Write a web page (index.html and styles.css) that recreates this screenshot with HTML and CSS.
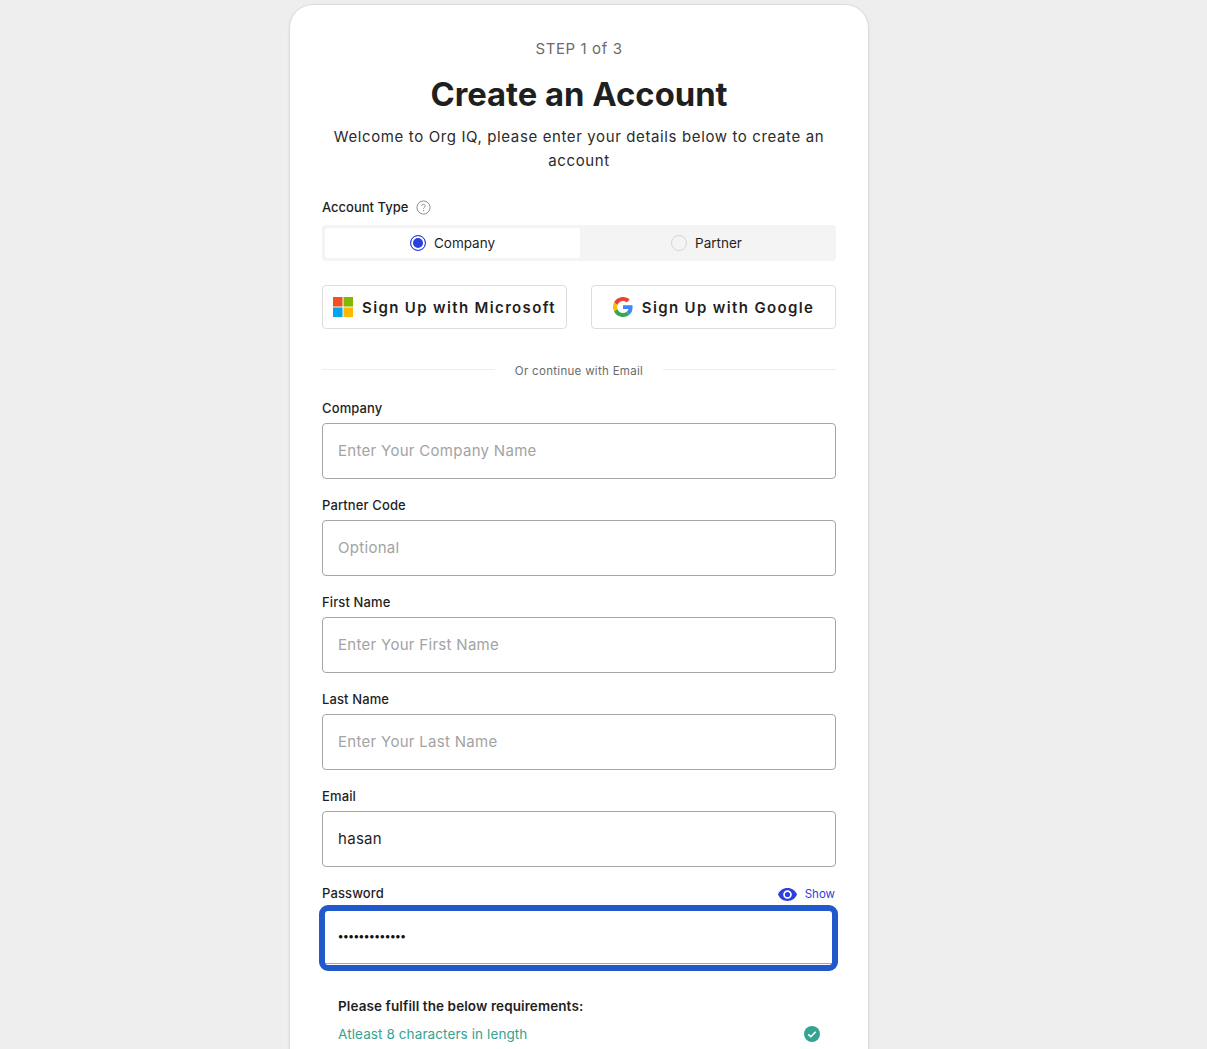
FILE: index.html
```html
<!DOCTYPE html>
<html lang="en">
<head>
<meta charset="utf-8">
<title>Create an Account</title>
<link rel="stylesheet" href="styles.css">
</head>
<body>
<main class="card">
  <p class="step">STEP 1 of 3</p>
  <h1 class="title">Create an Account</h1>
  <p class="intro">Welcome to Org IQ, please enter your details below to create an account</p>

  <div class="type-label"><span>Account Type</span>
    <svg class="help" viewBox="0 0 16 16" width="15" height="15" aria-hidden="true"><circle cx="8" cy="8" r="7" fill="none" stroke="#8a8a8a"/><path d="M6.200 6.300a1.800 1.800 0 1 1 2.700 1.600c-.6.400-.9.700-.9 1.400" fill="none" stroke="#8a8a8a"/><circle cx="8" cy="11.400" r=".7" fill="#8a8a8a"/></svg>
  </div>
  <div class="segmented">
    <div class="segment segment-on"><span class="radio radio-on"></span>Company</div>
    <div class="segment"><span class="radio"></span>Partner</div>
  </div>

  <div class="sso">
    <button class="sso-btn" type="button">
      <svg width="20" height="20" viewBox="0 0 21 21" aria-hidden="true"><rect width="10" height="10" fill="#f25022"/><rect x="11" width="10" height="10" fill="#7fba00"/><rect y="11" width="10" height="10" fill="#00a4ef"/><rect x="11" y="11" width="10" height="10" fill="#ffb900"/></svg>
      Sign Up with Microsoft
    </button>
    <button class="sso-btn" type="button">
      <svg width="20" height="20" viewBox="0 0 48 48" aria-hidden="true"><path fill="#EA4335" d="M24 9.500c3.500 0 6.700 1.200 9.200 3.600l6.900-6.900C35.900 2.400 30.500 0 24 0 14.600 0 6.500 5.400 2.600 13.200l8 6.200C12.500 13.600 17.800 9.500 24 9.500z"/><path fill="#4285F4" d="M47 24.500c0-1.600-.1-3.100-.4-4.500H24v9h12.900c-.6 3-2.200 5.400-4.700 7.100l7.700 6C44.400 37.900 47 31.800 47 24.500z"/><path fill="#FBBC05" d="M10.600 28.600a14.500 14.500 0 0 1 0-9.200l-8-6.200a24 24 0 0 0 0 21.600l8-6.200z"/><path fill="#34A853" d="M24 48c6.500 0 11.900-2.100 15.900-5.900l-7.700-6c-2.200 1.500-5 2.400-8.200 2.400-6.200 0-11.500-4.100-13.400-9.900l-8 6.200C6.500 42.600 14.600 48 24 48z"/></svg>
      Sign Up with Google
    </button>
  </div>

  <div class="divider"><span>Or continue with Email</span></div>

  <div class="field">
    <label class="label" for="company">Company</label>
    <input class="input" id="company" placeholder="Enter Your Company Name">
  </div>
  <div class="field">
    <label class="label" for="partner">Partner Code</label>
    <input class="input" id="partner" placeholder="Optional">
  </div>
  <div class="field">
    <label class="label" for="first">First Name</label>
    <input class="input" id="first" placeholder="Enter Your First Name">
  </div>
  <div class="field">
    <label class="label" for="last">Last Name</label>
    <input class="input" id="last" placeholder="Enter Your Last Name">
  </div>
  <div class="field">
    <label class="label" for="email">Email</label>
    <input class="input" id="email" value="hasan">
  </div>
  <div class="field">
    <div class="label-row">
      <label class="label" for="password">Password</label>
      <span class="show">
        <svg width="19" height="13" viewBox="0 0 22 15" aria-hidden="true"><path fill="#2a3fdc" d="M11 0C6 0 1.700 3.100 0 7.500 1.700 11.900 6 15 11 15s9.300-3.100 11-7.500C20.300 3.100 16 0 11 0zm0 12.500a5 5 0 1 1 0-10 5 5 0 0 1 0 10zm0-8a3 3 0 1 0 0 6 3 3 0 0 0 0-6z"/></svg>
        Show
      </span>
    </div>
    <div class="pw-wrap">
      <input class="input input-pw" id="password" type="password" value="abcdefghijklm">
    </div>
  </div>

  <div class="reqs">
    <p class="reqs-title">Please fulfill the below requirements:</p>
    <div class="req">
      <span>Atleast 8 characters in length</span>
      <svg width="16" height="16" viewBox="0 0 16 16" aria-hidden="true"><circle cx="8" cy="8" r="8" fill="#36a291"/><path d="M4.300 8.300l2.500 2.400 4.900-5" fill="none" stroke="#fff" stroke-width="1.600"/></svg>
    </div>
  </div>
</main>
</body>
</html>
```
FILE: styles.css
```css
* { box-sizing: border-box; }
html, body { height: 100%; overflow: hidden; }
body {
  margin: 0;
  background: #eeeeee;
  padding: 4px 0 0 289px;
  font-family: "Inter", "Liberation Sans", sans-serif;
  color: #1f1f1f;
}
.card {
  width: 580px;
  height: 1200px;
  background: #fff;
  border: 1px solid #dddddd;
  border-radius: 24px;
  box-shadow: 0 1px 3px rgba(0,0,0,.08);
  padding: 34px 32px 32px;
}
.step {
  margin: 0;
  text-align: center;
  font-size: 15px;
  line-height: 20px;
  color: #6b6b6b;
  letter-spacing: .6px;
}
.title {
  margin: 14px 0 0;
  text-align: center;
  font-size: 32.800px;
  line-height: 42px;
  font-weight: 700;
  color: #1f1f1f;
}
.intro {
  margin: 10px 0 0;
  text-align: center;
  font-size: 15px;
  line-height: 24px;
  letter-spacing: .62px;
  color: #2b2b2b;
}
.type-label {
  margin-top: 24px;
  display: flex;
  align-items: center;
  gap: 8px;
  font-size: 13px;
  line-height: 20px;
  font-weight: 500;
}
.help { display: block; }
.segmented {
  margin-top: 8px;
  height: 36px;
  padding: 3px;
  background: #f4f4f4;
  border-radius: 4px;
  display: grid;
  grid-template-columns: 255px 1fr;
  font-size: 13.500px;
}
.segment {
  display: flex;
  align-items: center;
  justify-content: center;
  gap: 8px;
  border-radius: 3px;
}
.segment-on { background: #fff; }
.radio {
  width: 16px;
  height: 16px;
  border-radius: 50%;
  border: 1px solid #d5d5d5;
  background: #f4f4f4;
}
.radio-on {
  border: 1.500px solid #2a3fdc;
  background: #2a3fdc;
  box-shadow: inset 0 0 0 2px #fff;
}
.sso {
  margin-top: 24px;
  display: flex;
  justify-content: space-between;
}
.sso-btn {
  width: 245px;
  height: 44px;
  background: #fff;
  border: 1px solid #dddddd;
  border-radius: 4px;
  display: flex;
  align-items: center;
  justify-content: center;
  gap: 9px;
  font: 600 15px "Inter", "Liberation Sans", sans-serif;
  letter-spacing: 1.350px;
  color: #1f1f1f;
  padding: 0;
}
.divider {
  margin-top: 31px;
  display: flex;
  align-items: flex-start;
  gap: 20px;
  font-size: 11.500px;
  line-height: 18px;
  color: #6b6b6b;
  letter-spacing: .3px;
}
.divider span { padding-top: 2px; }
.divider::before, .divider::after {
  content: "";
  flex: 1;
  height: 1px;
  margin-top: 9px;
  background: #eeeeee;
}
.field { margin-top: 16px; }
.divider + .field { margin-top: 18px; }
.label {
  display: block;
  font-size: 13px;
  line-height: 20px;
  font-weight: 500;
  letter-spacing: .12px;
  margin-bottom: 5px;
}
.label-row {
  display: flex;
  justify-content: space-between;
  align-items: flex-start;
}
.show {
  display: flex;
  align-items: center;
  height: 20px;
  margin-top: 1px;
  padding-right: 1px;
  gap: 8px;
  font-size: 11.500px;
  color: #2a3fdc;
}
.input {
  display: block;
  width: 100%;
  height: 56px;
  border: 1px solid #a6a6a6;
  border-radius: 4px;
  padding: 0 15px 2px;
  background: #fff;
  font: 400 15px "Inter", "Liberation Sans", sans-serif;
  letter-spacing: .3px;
  color: #1f1f1f;
  outline: none;
}
.input::placeholder { color: #a3a3a3; opacity: 1; }
.pw-wrap { position: relative; }
.pw-wrap::after {
  content: "";
  position: absolute;
  inset: -3px -2px -7px -3px;
  border: 6px solid #2158cb;
  border-radius: 9px;
  pointer-events: none;
}
.input-pw {
  padding-bottom: 0;
  font-size: 11px;
  font-weight: 700;
  letter-spacing: 0;
  color: #111;
}
.reqs { margin-top: 32px; padding: 0 16px; }
.reqs-title {
  margin: 0;
  font-size: 13.500px;
  line-height: 20px;
  font-weight: 600;
  letter-spacing: .1px;
}
.req {
  margin-top: 8px;
  display: flex;
  justify-content: space-between;
  align-items: center;
  font-size: 13.500px;
  line-height: 20px;
  color: #36a291;
  letter-spacing: .1px;
}
```
